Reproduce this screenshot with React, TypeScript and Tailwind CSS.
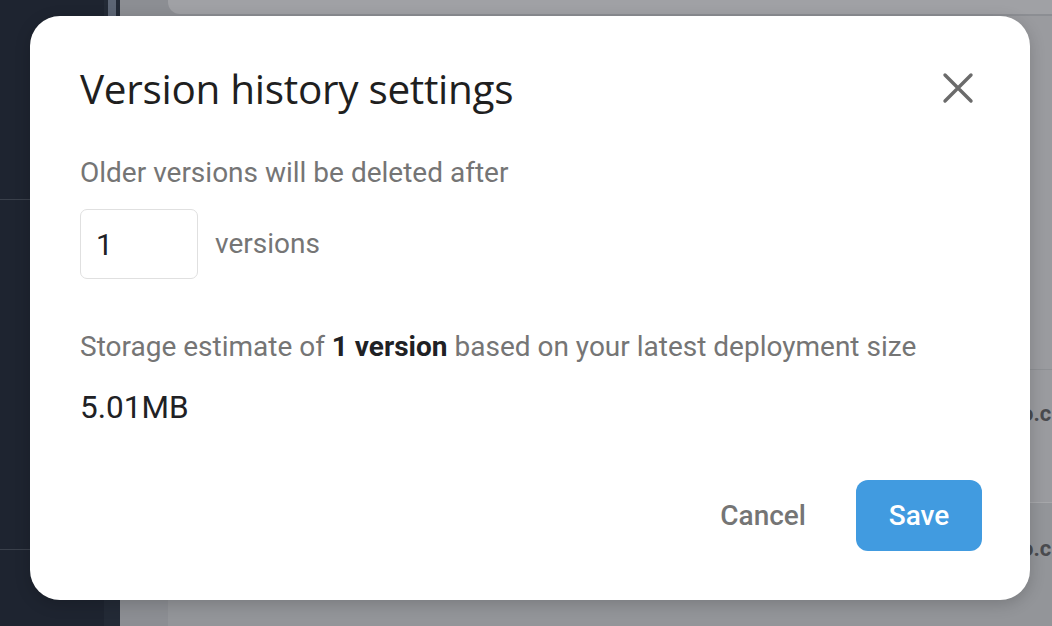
import React from "react";

function CloseIcon() {
  return (
    <svg width="34" height="34" viewBox="0 0 34 34" fill="none">
      <path d="M4 4L30 30M30 4L4 30" stroke="#6b6b6b" strokeWidth="3.4" strokeLinecap="round" />
    </svg>
  );
}

export default function App() {
  return (
    <div className="relative w-[1052px] h-[626px] overflow-hidden flex bg-[#8c8e93] font-['Roboto',sans-serif]">
      {/* Sidebar behind the dialog */}
      <div className="flex flex-col shrink-0 w-[104px] h-full bg-[#1e2430]">
        <div className="h-[200px] border-b border-[#3a404b]" />
        <div className="h-[350px] border-b border-[#3a404b]" />
        <div className="flex-1" />
      </div>
      <div className="flex shrink-0 w-[16px] h-full bg-[#232a36]">
        <div className="ml-[4px] w-[8px] h-[16px] bg-[#5c6574]" />
      </div>

      {/* Page content behind the dialog */}
      <div className="flex-1 min-w-0 overflow-hidden flex flex-col pl-[48px]">
        <div className="h-[14px] rounded-bl-[12px] bg-[#a0a1a5]" />
        <div className="flex-1 flex flex-col mt-[2px] bg-[#9a9b9f]">
          <div className="h-[354px] border-b border-[#8e9094]" />
          <div className="h-[133px] pt-[27px] pl-[853px] border-b border-[#a6a7aa] whitespace-nowrap text-[22px] font-bold text-[#4a4b4f]">
            o.c
          </div>
          <div className="flex-1 pt-[29px] pl-[853px] bg-[#939599] whitespace-nowrap text-[22px] font-bold text-[#4a4b4f]">
            o.c
          </div>
        </div>
      </div>

      {/* Dialog */}
      <div className="absolute left-[30px] top-[16px] w-[1000px] h-[584px] flex flex-col rounded-[30px] bg-white px-[50px] shadow-[0_4px_16px_rgba(0,0,0,0.18)]">
        <div className="flex items-center justify-between pt-[49px]">
          <h2 className="text-[40.5px] leading-[48px] text-[#1f1f1f] font-['Open_Sans',sans-serif] tracking-[-0.3px]">
            Version history settings
          </h2>
          <button className="mr-[5px] mt-[-2px] flex items-center justify-center">
            <CloseIcon />
          </button>
        </div>

        <p className="mt-[44px] text-[28px] leading-[32px] text-[#757575]">Older versions will be deleted after</p>

        <div className="mt-[20px] flex items-center gap-[17px]">
          <div className="w-[118px] h-[70px] flex items-center pl-[15px] rounded-[7px] border-[1.5px] border-[#e0e0e0] text-[30px] text-[#202124]">
            1
          </div>
          <span className="text-[28px] text-[#757575]">versions</span>
        </div>

        <p className="mt-[52px] text-[28px] leading-[32px] text-[#757575]">
          Storage estimate of <span className="font-bold text-[#202124]">1 version</span> based on your latest deployment size
        </p>

        <p className="mt-[27px] text-[31.5px] leading-[36px] text-[#202124]">5.01MB</p>

        <div className="mt-auto mb-[49px] mr-[-2px] flex items-center justify-end gap-[50px]">
          <button className="text-[28px] font-medium text-[#757575]">Cancel</button>
          <button className="w-[126px] h-[71px] rounded-[12px] bg-[#419be0] text-[28px] font-medium text-white">
            Save
          </button>
        </div>
      </div>
    </div>
  );
}
